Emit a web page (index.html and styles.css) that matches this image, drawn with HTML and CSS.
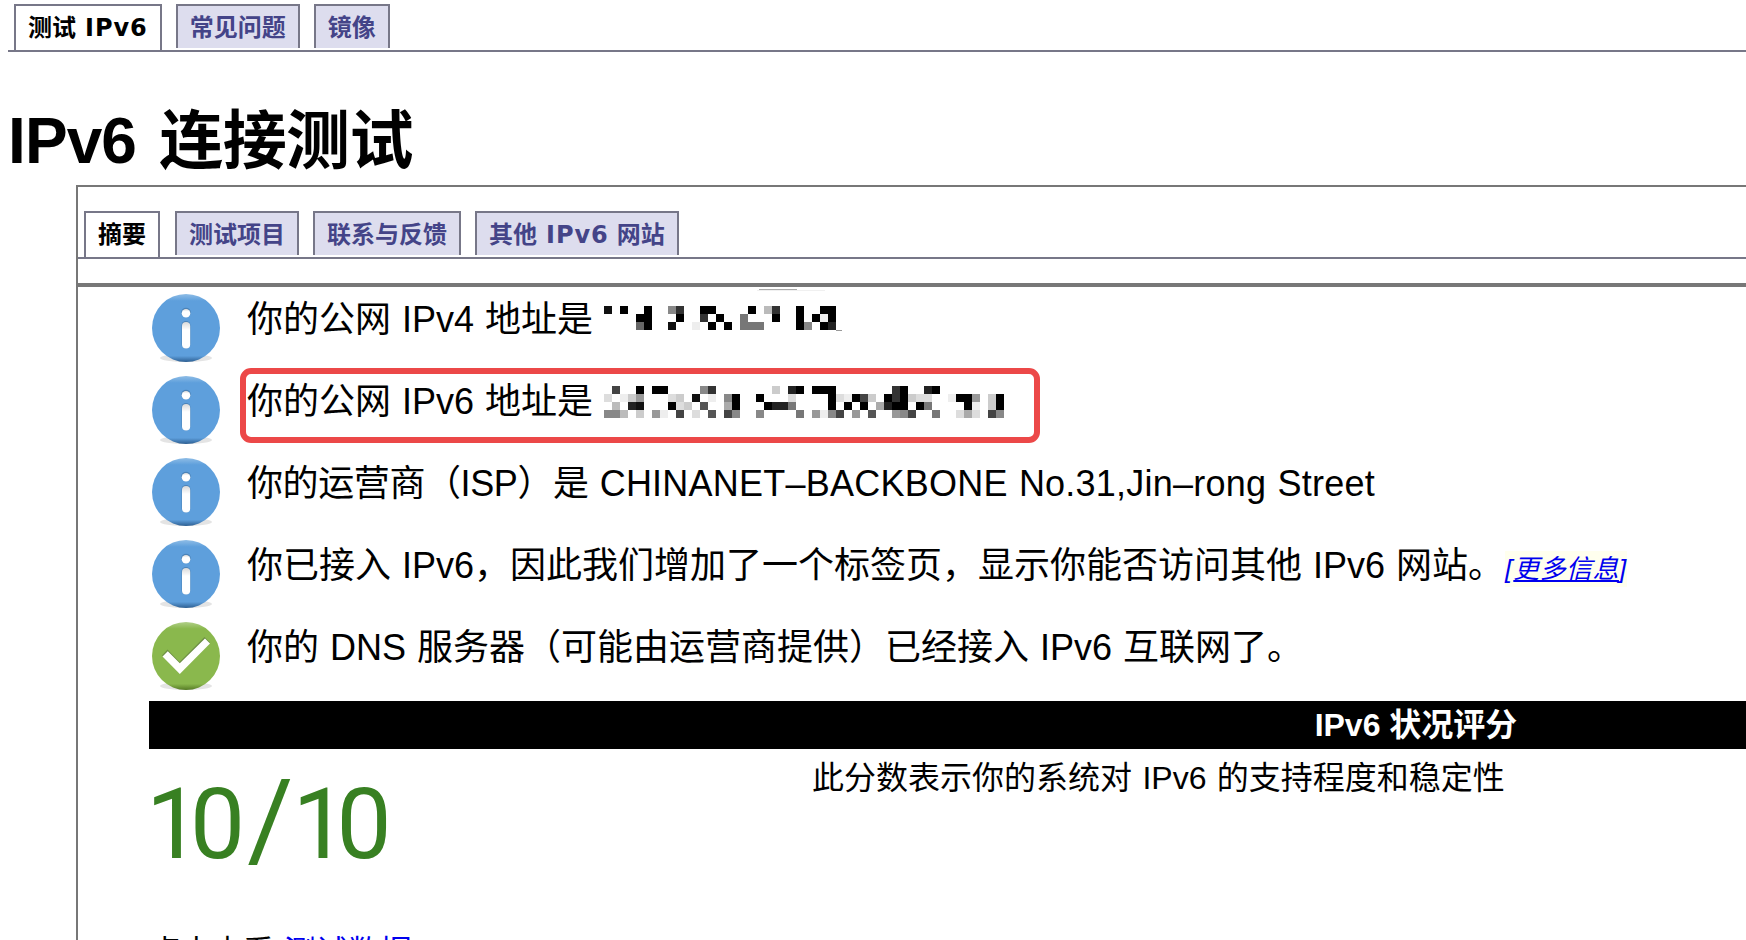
FILE: index.html
```html
<!DOCTYPE html>
<html lang="zh-CN">

<head>
    <meta charset="UTF-8">
    <meta name="viewport" content="width=device-width, initial-scale=1.0">
    <title>IPv6 连接测试</title>
    <link rel="stylesheet" href="styles.css">
</head>

<body>
    <svg class="defs" width="0" height="0">
        <defs>
            <linearGradient id="blue" x1="0" y1="0" x2="0" y2="1">
                <stop offset="0" stop-color="#8fbde6"/>
                <stop offset=".1" stop-color="#5e9fdc"/>
                <stop offset=".91" stop-color="#5e9fdc"/>
                <stop offset="1" stop-color="#2d5f92"/>
            </linearGradient>
            <linearGradient id="green" x1="0" y1="0" x2="0" y2="1">
                <stop offset="0" stop-color="#b0cf88"/>
                <stop offset=".1" stop-color="#8ab84d"/>
                <stop offset=".91" stop-color="#8ab84d"/>
                <stop offset="1" stop-color="#557a25"/>
            </linearGradient>
            <linearGradient id="white" x1="0" y1="0" x2="0" y2="1">
                <stop offset="0" stop-color="#d9d9d9"/>
                <stop offset=".3" stop-color="#fff"/>
            </linearGradient>
            <symbol id="info" viewBox="0 0 72 72">
                <ellipse cx="36" cy="66" rx="26" ry="4" fill="#e4e4e4"/>
                <circle cx="36" cy="36" r="34" fill="url(#blue)"/>
                <circle cx="36" cy="20.5" r="4.8" fill="#4b83b8"/>
                <circle cx="36" cy="21.3" r="4.3" fill="url(#white)"/>
                <rect x="31.5" y="29" width="9" height="27.5" rx="4.5" fill="#4b83b8"/>
                <rect x="32" y="30" width="8.2" height="26.5" rx="4.1" fill="url(#white)"/>
            </symbol>
            <symbol id="ok" viewBox="0 0 72 72">
                <ellipse cx="36" cy="66" rx="26" ry="4" fill="#e4e4e4"/>
                <circle cx="36" cy="36" r="34" fill="url(#green)"/>
                <path d="M12 35.5 L17.5 29.5 L29.5 42 L54.5 17 L60 22.5 L29.5 53 Z" fill="#6d8f45"/>
                <path d="M12.5 36.5 L17.8 31.2 L29.8 43.2 L55 18.4 L60 23.5 L29.8 54 Z" fill="#fff"/>
            </symbol>
        </defs>
    </svg>

    <ul class="tabs">
        <li class="active"><a>测试 <span class="latin">IPv6</span></a></li>
        <li><a>常见问题</a></li>
        <li><a>镜像</a></li>
    </ul>

    <h1><span>IPv6</span> 连接测试</h1>

    <div class="panel">
        <ul class="tabs inner">
            <li class="active"><a>摘要</a></li>
            <li><a>测试项目</a></li>
            <li><a>联系与反馈</a></li>
            <li><a>其他 <span class="latin">IPv6</span> 网站</a></li>
        </ul>

        <div class="content">
            <div class="row">
                <svg class="icon"><use href="#info"/></svg>
                <p>你的公网 IPv4 地址是</p>
                <svg class="mosaic" id="ipv4" width="240" height="24"></svg>
            </div>
            <div class="row">
                <svg class="icon"><use href="#info"/></svg>
                <p>你的公网 IPv6 地址是</p>
                <svg class="mosaic" id="ipv6" width="400" height="32"></svg>
                <div class="highlight"></div>
            </div>
            <div class="row">
                <svg class="icon"><use href="#info"/></svg>
                <p><span class="label">你的运营商（ISP）是</span> <span class="isp">CHINANET–BACKBONE No.31,Jin–rong Street</span></p>
            </div>
            <div class="row">
                <svg class="icon"><use href="#info"/></svg>
                <p>你已接入 IPv6，因此我们增加了一个标签页，显示你能否访问其他 IPv6 网站。<i class="more">[<u>更多信息</u>]</i></p>
            </div>
            <div class="row">
                <svg class="icon"><use href="#ok"/></svg>
                <p>你的 DNS 服务器（可能由运营商提供）已经接入 IPv6 互联网了。</p>
            </div>

            <div class="score-title">IPv6 状况评分</div>
            <div class="score-row">
                <div class="score"><span class="one">1</span>0<span class="slash">/</span><span class="one">1</span>0</div>
                <div class="score-note">此分数表示你的系统对 IPv6 的支持程度和稳定性</div>
            </div>
            <p class="data"><span>点击查看</span> <a>测试数据</a></p>
        </div>
    </div>

    <script src="mosaic.js"></script>
</body>

</html>
```
FILE: styles.css
```css
html {
    overflow: hidden;
}

body {
    margin: 0;
    height: 940px;
    overflow: hidden;
    background-color: #fff;
    color: #000;
    font-family: "Liberation Sans", "Noto Sans CJK SC", sans-serif;
}

.defs {
    position: absolute;
}

/* tabs */
.tabs {
    display: flex;
    gap: 14px;
    box-sizing: border-box;
    height: 48px;
    margin: 4px 0 0 8px;
    padding: 0 0 0 6px;
    border-bottom: 2px solid #778;
    list-style: none;
    white-space: nowrap;
    font: bold 24px/44px "DejaVu Sans", "Noto Sans CJK SC", sans-serif;
}

.tabs li {
    box-sizing: border-box;
    height: 44px;
    padding: 0 12px;
    border: 2px solid #778;
    border-bottom: none;
    background-color: #dde;
    color: #448;
    line-height: 40px;
}

.tabs a {
    font-family: "Noto Sans CJK SC", sans-serif;
}

.tabs .active {
    height: 46px;
    background-color: #fff;
    color: #000;
}

.tabs .latin {
    font-family: "DejaVu Sans", sans-serif;
    letter-spacing: 1px;
    margin-left: 3.5px;
}

.inner .latin {
    margin-right: 2.5px;
}

.inner {
    margin: 24px 0 0;
    padding-left: 6px;
}

.inner .active {
    margin-right: 1px;
}

h1 {
    height: 133px;
    margin: 0 0 0 8px;
    box-sizing: border-box;
    padding-top: 41px;
    font-size: 64px;
    line-height: 96px;
    word-spacing: 6px;
    letter-spacing: -.6px;
}

h1 span {
    letter-spacing: -.9px;
}

/* main panel */
.panel {
    height: 760px;
    margin-left: 76px;
    border-top: 2px solid #777;
    border-left: 2px solid #777;
}

.content {
    margin-top: 24px;
    border-top: 4px solid #777;
    padding: 4px 0 0 71px;
}

.row {
    position: relative;
    display: flex;
    height: 82px;
    white-space: nowrap;
}

.icon {
    width: 72px;
    height: 72px;
    margin: 1px 25px 0 1px;
}

.row p {
    margin: 0;
    font-size: 36px;
    line-height: 57px;
    word-spacing: 1px;
}

.label {
    letter-spacing: -.4px;
}

.isp {
    letter-spacing: .23px;
}

.mosaic {
    margin: 15px 0 0 11px;
    overflow: visible;
}

#ipv6 {
    margin-top: 13px;
}

.highlight {
    position: absolute;
    left: 91px;
    top: -5px;
    width: 788px;
    height: 63px;
    border: 6px solid #ec4848;
    border-radius: 11px;
}

.more {
    margin-left: 1px;
    padding: 3px 0;
    background-color: #ffe;
    color: #00e;
    font-size: 26px;
    letter-spacing: 1px;
}

.more u {
    letter-spacing: .4px;
}

/* score */
.score-title {
    height: 48px;
    padding-left: 937px;
    background-color: #000;
    color: #fff;
    font-size: 32px;
    font-weight: bold;
    line-height: 49px;
    text-align: center;
}

.score-row {
    display: flex;
    height: 179px;
}

.score {
    width: 665px;
    margin-left: -3px;
    color: #388022;
    font-family: Roboto, sans-serif;
    font-size: 98px;
    letter-spacing: -2px;
    line-height: 152px;
    flex: none;
}

.score .one {
    letter-spacing: -11px;
}

.score .slash {
    margin: 0 1px 0 4px;
    font-size: 112px;
    line-height: 1;
}

.score-note {
    margin-left: 1px;
    font-size: 32px;
    line-height: 58px;
    white-space: nowrap;
    word-spacing: 1.5px;
}

.data {
    margin: 0;
    font-size: 32px;
    line-height: 48px;
}

.data span {
    letter-spacing: -.8px;
}

.data a {
    margin-left: 1px;
    color: #00e;
}
```
FILE: mosaic.js
```js
// one hex digit per cell = grey level, "." = empty
var mosaics = {
    ipv4: [
        "1.0..0..83..00....0.b3..0..00",
        "....00...0..3.0..7...0..0.0e0",
        "....60..1..e.0.0.777....08.02"
    ],
    ipv6: [
        ".4..0.00....83.......c.20.000.......30..20........",
        "d.ec9...dc.1.e.80..0...d....0de04c.030cdd..e009.c0",
        ".b.21...0dc.5..a0...0227....0.0.0.a200.07....0e.c0",
        "88b.c.9e.4.d.5.48..8....7.9e84.9.5..984..7..dad.48"
    ]
};
var size = 8;

function addRect(svg, x, y, w, h, fill) {
    var rect = document.createElementNS("http://www.w3.org/2000/svg", "rect");
    rect.setAttribute("x", x);
    rect.setAttribute("y", y);
    rect.setAttribute("width", w);
    rect.setAttribute("height", h);
    rect.setAttribute("fill", fill);
    svg.appendChild(rect);
}

Object.keys(mosaics).forEach(function (id) {
    var svg = document.getElementById(id);
    mosaics[id].forEach(function (line, row) {
        line.split("").forEach(function (c, col) {
            if (c !== ".") {
                addRect(svg, col * size, row * size, size, size, "#" + c + c + c);
            }
        });
    });
});

// bits left uncovered around the first address
var first = document.getElementById("ipv4");
addRect(first, 155, -17, 38, 1, "#aaa");
addRect(first, 153, -16, 68, 1, "#f0f0f0");
addRect(first, 232, 24, 6, 1, "#999");
```
